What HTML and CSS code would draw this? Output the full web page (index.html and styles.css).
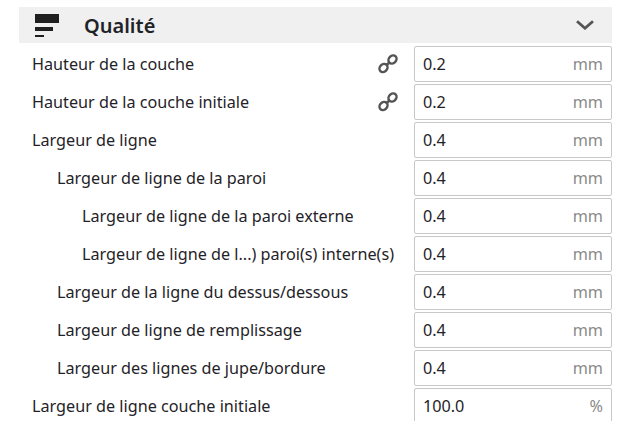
FILE: index.html
```html
<!DOCTYPE html>
<html lang="fr">
<head>
    <meta charset="UTF-8">
    <title>Qualité</title>
    <link rel="stylesheet" href="styles.css">
</head>
<body>
<div class="panel">
    <div class="header">
        <svg class="quality-icon" width="24" height="24" viewBox="0 0 24 24">
            <rect x="0" y="1" width="24" height="9" fill="#1f1f1f"/>
            <rect x="0" y="14" width="18" height="4" fill="#1f1f1f"/>
            <rect x="0" y="22" width="9" height="2" fill="#1f1f1f"/>
        </svg>
        <span class="title">Qualité</span>
        <svg class="chevron" width="18" height="10" viewBox="0 0 18 10">
            <path d="M1 1.2 L9 8.2 L17 1.2" fill="none" stroke="#555" stroke-width="2.8"/>
        </svg>
    </div>

    <div class="row">
        <span class="label">Hauteur de la couche</span>
        <svg class="link-icon" width="20" height="20" viewBox="0 0 20 20">
            <g fill="none" stroke="#555" stroke-width="2.5">
                <ellipse cx="5.5" cy="14" rx="4.4" ry="3.6" transform="rotate(-45 5.5 14)"/>
                <ellipse cx="14.5" cy="5.5" rx="4.4" ry="3.6" transform="rotate(-45 14.5 5.5)"/>
                <path d="M8 11.5 L12 8"/>
            </g>
        </svg>
        <div class="field"><span>0.2</span><span class="unit">mm</span></div>
    </div>
    <div class="row">
        <span class="label">Hauteur de la couche initiale</span>
        <svg class="link-icon" width="20" height="20" viewBox="0 0 20 20">
            <g fill="none" stroke="#555" stroke-width="2.5">
                <ellipse cx="5.5" cy="14" rx="4.4" ry="3.6" transform="rotate(-45 5.5 14)"/>
                <ellipse cx="14.5" cy="5.5" rx="4.4" ry="3.6" transform="rotate(-45 14.5 5.5)"/>
                <path d="M8 11.5 L12 8"/>
            </g>
        </svg>
        <div class="field"><span>0.2</span><span class="unit">mm</span></div>
    </div>
    <div class="row">
        <span class="label">Largeur de ligne</span>
        <div class="field"><span>0.4</span><span class="unit">mm</span></div>
    </div>
    <div class="row indent-1">
        <span class="label">Largeur de ligne de la paroi</span>
        <div class="field"><span>0.4</span><span class="unit">mm</span></div>
    </div>
    <div class="row indent-2">
        <span class="label">Largeur de ligne de la paroi externe</span>
        <div class="field"><span>0.4</span><span class="unit">mm</span></div>
    </div>
    <div class="row indent-2">
        <span class="label">Largeur de ligne de l...) paroi(s) interne(s)</span>
        <div class="field"><span>0.4</span><span class="unit">mm</span></div>
    </div>
    <div class="row indent-1">
        <span class="label">Largeur de la ligne du dessus/dessous</span>
        <div class="field"><span>0.4</span><span class="unit">mm</span></div>
    </div>
    <div class="row indent-1">
        <span class="label">Largeur de ligne de remplissage</span>
        <div class="field"><span>0.4</span><span class="unit">mm</span></div>
    </div>
    <div class="row indent-1">
        <span class="label">Largeur des lignes de jupe/bordure</span>
        <div class="field"><span>0.4</span><span class="unit">mm</span></div>
    </div>
    <div class="row">
        <span class="label">Largeur de ligne couche initiale</span>
        <div class="field"><span>100.0</span><span class="unit">%</span></div>
    </div>
</div>
</body>
</html>
```
FILE: styles.css
```css
html, body {
    height: 100%;
}

body {
    margin: 0;
    background: #fff;
    overflow: hidden;
    font-family: "Noto Sans", sans-serif;
    font-size: 16.2px;
    color: #1f2328;
}

.panel {
    width: 593px;
    margin-left: 19px;
    padding-top: 7px;
}

.header {
    display: flex;
    align-items: center;
    height: 36px;
    margin-bottom: 3px;
    padding: 0 18px 0 16px;
    background: #f0f0f0;
}

.quality-icon {
    flex: none;
}

.title {
    flex: 1;
    margin-left: 25px;
    font-size: 20px;
    font-weight: 600;
}

.row {
    display: flex;
    align-items: center;
    height: 36px;
    margin-bottom: 2px;
    padding-left: 13px;
}

.indent-1 {
    padding-left: 38px;
}

.indent-2 {
    padding-left: 63px;
}

.label {
    flex: 1;
}

.link-icon {
    flex: none;
    margin-right: 16px;
}

.field {
    display: flex;
    justify-content: space-between;
    align-items: center;
    box-sizing: border-box;
    width: 198px;
    height: 36px;
    padding: 0 8px;
    background: #fff;
    border: 1px solid #c8c8c8;
    border-radius: 2px;
}

.unit {
    color: #8a8a8a;
}
```
